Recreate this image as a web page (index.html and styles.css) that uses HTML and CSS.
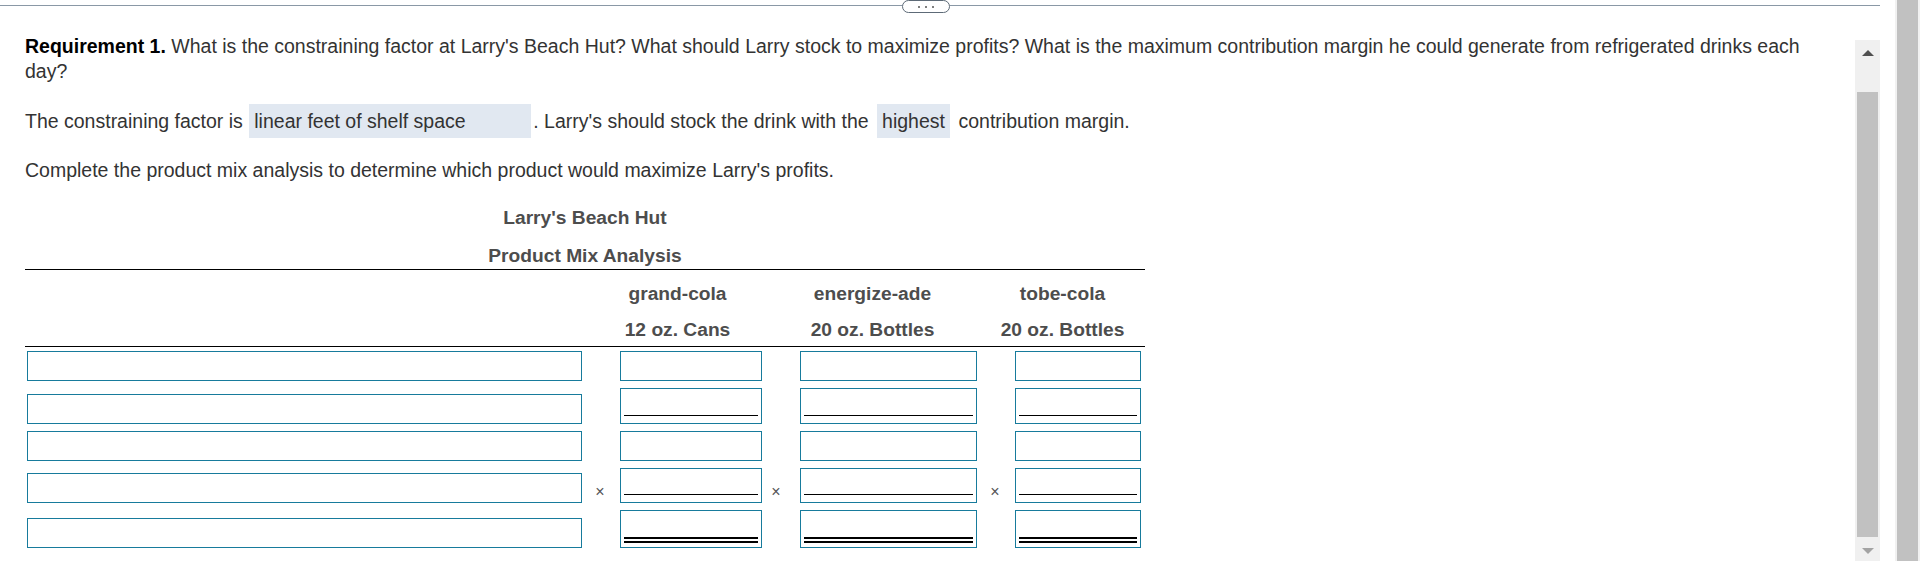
FILE: index.html
```html
<!DOCTYPE html>
<html lang="en">
<head>
<meta charset="utf-8">
<title>Larry's Beach Hut</title>
<link rel="stylesheet" href="styles.css">
</head>
<body>
<div class="page">
  <div class="main">
    <div class="topbar">
      <div class="rule rule-left"></div>
      <div class="pill"><span class="dot"></span><span class="dot"></span><span class="dot"></span></div>
      <div class="rule rule-right"></div>
    </div>
    <div class="body-row">
      <div class="content">
        <p class="req"><b>Requirement 1.</b> <span>What is the constraining factor at Larry's Beach Hut? What should Larry stock to maximize profits? What is the maximum contribution margin he could generate from refrigerated drinks each</span> <span>day?</span></p>
        <p class="answer">The constraining factor is <span class="dd dd-wide">linear feet of shelf space</span>. Larry's should stock the drink with the <span class="dd dd-short">highest</span> contribution margin.</p>
        <p class="instr">Complete the product mix analysis to determine which product would maximize Larry's profits.</p>

        <div class="pm">
          <div class="pm-title">Larry's Beach Hut</div>
          <div class="pm-title pm-title2">Product Mix Analysis</div>
          <div class="pm-head">
            <div class="hrow hrow1">
              <span class="hc c1"></span>
              <span class="hc c2">grand-cola</span>
              <span class="hc c3">energize-ade</span>
              <span class="hc c4">tobe-cola</span>
            </div>
            <div class="hrow hrow2">
              <span class="hc c1"></span>
              <span class="hc c2">12 oz. Cans</span>
              <span class="hc c3">20 oz. Bottles</span>
              <span class="hc c4">20 oz. Bottles</span>
            </div>
          </div>

          <div class="pm-rows">
            <div class="row">
              <div class="lab-cell"><div class="box lab"></div></div>
              <span class="xc xc1"></span><div class="box v1"></div>
              <span class="xc xc2"></span><div class="box v2"></div>
              <span class="xc xc3"></span><div class="box v3"></div>
            </div>
            <div class="row">
              <div class="lab-cell"><div class="box lab"></div></div>
              <span class="xc xc1"></span><div class="box v1 ul ul-a"><div class="uline"></div></div>
              <span class="xc xc2"></span><div class="box v2 ul ul-a"><div class="uline"></div></div>
              <span class="xc xc3"></span><div class="box v3 ul ul-a"><div class="uline"></div></div>
            </div>
            <div class="row">
              <div class="lab-cell"><div class="box lab"></div></div>
              <span class="xc xc1"></span><div class="box v1"></div>
              <span class="xc xc2"></span><div class="box v2"></div>
              <span class="xc xc3"></span><div class="box v3"></div>
            </div>
            <div class="row">
              <div class="lab-cell"><div class="box lab"></div></div>
              <span class="xc xc1">×</span><div class="box v1 ul ul-b"><div class="uline"></div></div>
              <span class="xc xc2">×</span><div class="box v2 ul ul-b"><div class="uline"></div></div>
              <span class="xc xc3">×</span><div class="box v3 ul ul-b"><div class="uline"></div></div>
            </div>
            <div class="row">
              <div class="lab-cell"><div class="box lab"></div></div>
              <span class="xc xc1"></span><div class="box v1 ul dbl"><div class="dline"></div></div>
              <span class="xc xc2"></span><div class="box v2 ul dbl"><div class="dline"></div></div>
              <span class="xc xc3"></span><div class="box v3 ul dbl"><div class="dline"></div></div>
            </div>
          </div>
        </div>
      </div>
      <div class="vscroll">
        <div class="arrow-up"></div>
        <div class="vthumb"></div>
        <div class="arrow-down"></div>
      </div>
    </div>
  </div>
  <div class="oscroll"><div class="othumb"></div></div>
</div>
</body>
</html>
```

FILE: styles.css
```css
* { box-sizing: border-box; }

html, body {
  margin: 0;
  padding: 0;
  background: #ffffff;
}

body {
  font-family: "Liberation Sans", Arial, Helvetica, sans-serif;
  font-size: 19.5px;
  color: #333333;
  overflow: hidden;
}

.page {
  display: flex;
  width: 1920px;
  height: 561px;
}

.main {
  flex: 1;
  display: flex;
  flex-direction: column;
  padding-right: 15px;
  min-width: 0;
}

/* top separator with the "..." pill */
.topbar {
  display: flex;
  align-items: flex-start;
  height: 13px;
  flex: none;
}

.rule {
  margin-top: 5px;
  border-top: 1px solid #8a98a6;
}

.rule-left { flex: 0 0 902px; }
.rule-right { flex: 1; }

.pill {
  flex: 0 0 48px;
  height: 13px;
  border: 1px solid #5d6a77;
  border-radius: 7px;
  display: flex;
  align-items: center;
  justify-content: center;
  gap: 5px;
  background: #fff;
}

.dot {
  width: 2px;
  height: 2px;
  background: #555;
  border-radius: 50%;
}

.body-row {
  flex: 1;
  display: flex;
  min-height: 0;
}

.content {
  flex: 1;
  padding: 0 25px;
  min-width: 0;
}

p { margin: 0; }

.req {
  margin-top: 21px;
  line-height: 25px;
}

.req b {
  color: #000;
  font-weight: bold;
}

.answer {
  margin-top: 20px;
  line-height: 34px;
  height: 34px;
}

.dd {
  display: inline-block;
  height: 34px;
  line-height: 34px;
  padding: 0 5px;
  background: #e1e8f1;
  vertical-align: top;
}

.dd-wide { width: 282px; margin: 0 2px 0 1px; }
.dd-short { width: 73px; margin: 0 3px 0 3px; }

.instr {
  margin-top: 20px;
  line-height: 25px;
}

/* product mix table */
.pm {
  width: 1120px;
  margin-top: 22px;
  font-size: 19.2px;
}

.pm-title {
  text-align: center;
  font-weight: bold;
  color: #4d4d4d;
  line-height: 25px;
}

.pm-title2 {
  margin-top: 13px;
  padding-bottom: 1px;
}

.pm-head {
  border-top: 1px solid #000;
  border-bottom: 1px solid #000;
  padding-top: 6px;
}

.hrow {
  display: flex;
  font-weight: bold;
  color: #4d4d4d;
}

.hrow1 { height: 36px; line-height: 36px; }
.hrow2 { height: 34px; line-height: 36px; }

.hc { text-align: center; white-space: nowrap; }
.c1 { width: 565px; }
.c2 { width: 175px; }
.c3 { width: 215px; }
.c4 { width: 165px; }

.pm-rows {
  margin-top: 4px;
  display: flex;
  flex-direction: column;
  gap: 7px;
}

.row {
  display: flex;
  align-items: flex-end;
}

.lab-cell {
  width: 565px;
  padding-left: 2px;
  flex: none;
}

.box {
  border: 1px solid #177b9c;
  height: 30px;
  background: #fff;
  flex: none;
}

.lab { width: 555px; }

.v1 { width: 142px; margin-left: 10px; }
.v2 { width: 177px; margin-left: 14px; }
.v3 { width: 126px; margin-left: 10px; }

.xc {
  width: 20px;
  flex: none;
  text-align: center;
  font-size: 16px;
  line-height: 22px;
  height: 22px;
  color: #555;
}

.xc2 { margin-left: 4px; }
.xc3 { margin-left: 8px; }

.ul {
  display: flex;
  flex-direction: column;
  justify-content: flex-end;
  padding: 0 3px 7px 3px;
}

.ul-a { height: 36px; }
.ul-b { height: 35px; }

.uline {
  border-bottom: 1px solid #000;
}

.dbl {
  height: 38px;
  padding-bottom: 4px;
}

.dline {
  border-bottom: 6px double #000;
}

/* inner scrollbar */
.vscroll {
  flex: 0 0 25px;
  margin-top: 27px;
  background: #f0f0f0;
  display: flex;
  flex-direction: column;
  align-items: center;
  padding-top: 10px;
}

.arrow-up {
  width: 0;
  height: 0;
  border-left: 6px solid transparent;
  border-right: 6px solid transparent;
  border-bottom: 6px solid #505050;
}

.vthumb {
  margin-top: 36px;
  width: 21px;
  height: 445px;
  background: #c1c1c1;
}

.arrow-down {
  margin-top: 11px;
  width: 0;
  height: 0;
  border-left: 6px solid transparent;
  border-right: 6px solid transparent;
  border-top: 6px solid #a3a3a3;
}

/* outer page scrollbar */
.oscroll {
  flex: 0 0 25px;
  background: #f1f1f1;
  padding: 0 2px;
}

.othumb {
  height: 100%;
  background: #c1c1c1;
}
```
